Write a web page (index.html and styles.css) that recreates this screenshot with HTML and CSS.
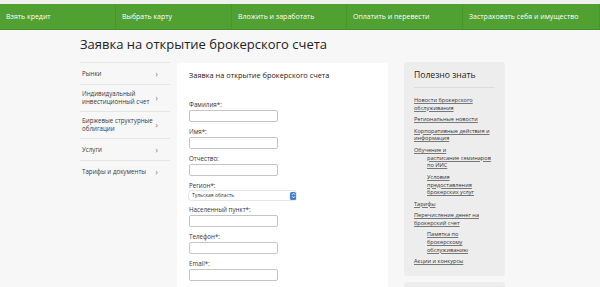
FILE: index.html
```html
<!DOCTYPE html>
<html lang="ru">
<head>
<meta charset="utf-8">
<title>Заявка на открытие брокерского счета</title>
<link rel="stylesheet" href="styles.css">
</head>
<body>
<div class="topstrip"></div>
<nav class="mainnav">
  <a class="navitem">Взять кредит</a>
  <a class="navitem">Выбрать карту</a>
  <a class="navitem">Вложить и заработать</a>
  <a class="navitem">Оплатить и перевести</a>
  <a class="navitem">Застраховать себя и имущество</a>
</nav>
<div class="page">
  <h1 class="title">Заявка на открытие брокерского счета</h1>
  <div class="columns">
    <ul class="sidemenu">
      <li class="sideitem"><span>Рынки</span><span class="chev">›</span></li>
      <li class="sideitem"><span>Индивидуальный<br>инвестиционный счет</span><span class="chev">›</span></li>
      <li class="sideitem"><span>Биржевые структурные<br>облигации</span><span class="chev">›</span></li>
      <li class="sideitem"><span>Услуги</span><span class="chev">›</span></li>
      <li class="sideitem last"><span>Тарифы и документы</span><span class="chev">›</span></li>
    </ul>
    <main class="card">
      <h2 class="cardtitle">Заявка на открытие брокерского счета</h2>
      <div class="field"><label class="lbl">Фамилия*:</label><div class="input"></div></div>
      <div class="field"><label class="lbl">Имя*:</label><div class="input"></div></div>
      <div class="field"><label class="lbl">Отчество:</label><div class="input"></div></div>
      <div class="field"><label class="lbl">Регион*:</label>
        <div class="select"><span class="selval">Тульская область</span><span class="stepper"><svg width="5" height="7" viewBox="0 0 5 7"><path d="M1 2.8 L2.5 1.2 L4 2.8 M1 4.2 L2.5 5.8 L4 4.2" stroke="#fff" stroke-width="0.9" fill="none"/></svg></span></div>
      </div>
      <div class="field"><label class="lbl">Населенный пункт*:</label><div class="input"></div></div>
      <div class="field"><label class="lbl">Телефон*:</label><div class="input"></div></div>
      <div class="field"><label class="lbl">Email*:</label><div class="input"></div></div>
    </main>
    <aside class="side">
      <div class="panel">
        <h3 class="paneltitle">Полезно знать</h3>
        <ul class="links">
          <li><a>Новости брокерского<br>обслуживания</a></li>
          <li><a>Региональные новости</a></li>
          <li><a>Корпоративные действия и<br>информация</a></li>
          <li class="nogap"><a>Обучение и</a>
            <ul class="sublinks">
              <li><a>расписание семинаров<br>по ИИС</a></li>
              <li><a>Условия<br>предоставления<br>брокерских услуг</a></li>
            </ul>
          </li>
          <li><a>Тарифы</a></li>
          <li><a>Перечисление денег на<br>брокерский счет</a>
            <ul class="sublinks">
              <li><a>Памятка по<br>брокерскому<br>обслуживанию</a></li>
            </ul>
          </li>
          <li><a>Акции и конкурсы</a></li>
        </ul>
      </div>
      <div class="panel panel2"></div>
    </aside>
  </div>
</div>
</body>
</html>
```
FILE: styles.css
```css
* { box-sizing: border-box; }
html, body { margin: 0; padding: 0; }
body {
  background: #f7f7f7;
  font-family: "Open Sans", "Liberation Sans", sans-serif;
  color: #333;
  overflow: hidden;
  height: 287px;
}
.topstrip { height: 4px; background: #eef1ec; }
.mainnav {
  height: 26px;
  background: #50a032;
  display: grid;
  grid-template-columns: 116px 116px 115px 116px 1fr;
  border-bottom: 1px solid #478f2c;
}
.navitem {
  color: #fff;
  font-size: 7px;
  line-height: 25px;
  padding-left: 6px;
  border-right: 1px solid #4a962e;
  white-space: nowrap;
}
.page { margin-left: 80px; width: 425px; }
.title {
  margin: 0;
  padding-top: 7px;
  height: 32px;
  font-size: 13px;
  font-weight: 400;
  line-height: 15px;
  color: #222;
}
.columns { display: flex; align-items: flex-start; }
.sidemenu {
  list-style: none;
  margin: 0;
  padding: 0;
  width: 90px;
  border-top: 1px solid #e6e6e6;
}
.sideitem {
  display: flex;
  justify-content: space-between;
  align-items: center;
  padding: 0 12px 0 2px;
  min-height: 22px;
  font-size: 6.2px;
  line-height: 8px;
  color: #3a3a3a;
  border-bottom: 1px solid #e6e6e6;
}
.sideitem:nth-child(2), .sideitem:nth-child(3) { min-height: 27px; }
.sideitem.last { border-bottom: none; }
.chev { color: #888; font-size: 9px; line-height: 8px; }
.card {
  margin-left: 7px;
  width: 211px;
  height: 240px;
  margin-top: 1px;
  background: #fff;
  border-radius: 3px;
  padding: 7px 12px 0;
}
.cardtitle {
  margin: 0 0 21px;
  font-size: 7.4px;
  font-weight: 400;
  line-height: 10px;
  color: #222;
}
.field { margin-bottom: 6px; }
.lbl { display: block; font-size: 6.2px; line-height: 8px; margin-bottom: 1px; color: #333; }
.input {
  width: 89px;
  height: 12px;
  border: 1px solid #c4c4c4;
  border-radius: 2px;
  background: #fff;
}
.select {
  width: 107px;
  height: 9px;
  margin-bottom: 2px;
  border-radius: 2px;
  background: #fff;
  box-shadow: 0 0 0 0.5px #d0d0d0;
  display: flex;
  justify-content: space-between;
  align-items: center;
}
.selval { font-size: 5px; line-height: 9px; padding-left: 3px; color: #333; }
.stepper {
  width: 6px;
  height: 8px;
  background: #3d7fe0;
  border-radius: 1.5px;
  display: flex;
  align-items: center;
  justify-content: center;
}
.side { margin-left: 16px; width: 101px; }
.panel {
  background: #ededed;
  border-radius: 3px;
  padding: 8px 10px 10px;
}
.paneltitle {
  margin: 0;
  font-size: 8.6px;
  font-weight: 400;
  line-height: 10px;
  padding-bottom: 7px;
  border-bottom: 1px solid #dcdcdc;
  color: #222;
}
.links { list-style: none; margin: 9px 0 0; padding: 0; }
.links li { font-size: 5.6px; line-height: 7.7px; margin-bottom: 3.8px; }
.links li.nogap > .sublinks { margin-top: 0; }
.links a { color: #333; text-decoration: underline; text-decoration-color: #777; }
.sublinks { list-style: none; margin: 3.8px 0 0; padding: 0 0 0 13px; }
.sublinks li:last-child { margin-bottom: 0; }
.links li:last-child { margin-bottom: 0; }
.panel2 { margin-top: 6px; height: 40px; }
```
